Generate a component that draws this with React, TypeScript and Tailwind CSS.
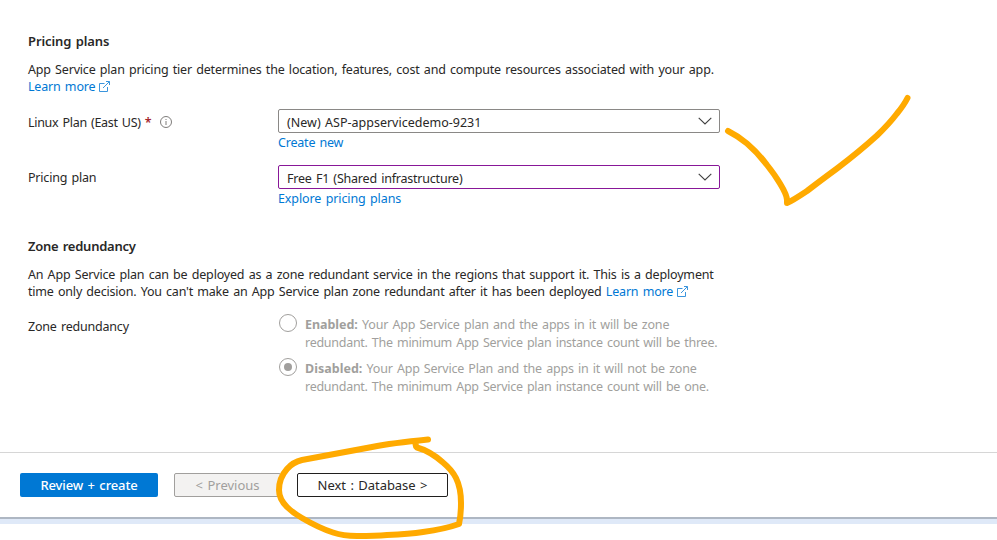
import type { ReactNode } from "react";

function ExternalIcon() {
  return (
    <svg className="ml-1 inline-block h-[11px] w-[11px] align-[-1px]" viewBox="0 0 11 11" fill="none" stroke="#3b95dd" strokeWidth="1">
      <path d="M5.500 2.500h-5v8h8V6" />
      <path d="M4 7 10.300.7M7 .5h3.500V4" />
    </svg>
  );
}

function Select({ value, border }: { value: string; border: string }) {
  return (
    <div className={`flex h-6 w-[442px] items-center justify-between rounded-[2px] border bg-white pl-2 pr-[7px] ${border}`}>
      <span className="pt-[2px]">{value}</span>
      <svg className="h-2 w-[14px]" viewBox="0 0 14 8" fill="none" stroke="#404040" strokeWidth="1.100">
        <path d="M.7.9 7 7 13.300.9" />
      </svg>
    </div>
  );
}

function Radio({ checked, children }: { checked?: boolean; children: ReactNode }) {
  return (
    <div className="flex h-11 tracking-[-0.27px] text-[#a19f9d]">
      <span className="mt-[-1px] ml-px flex h-[18px] w-[18px] shrink-0 items-center justify-center rounded-full border border-[#a19f9d]">
        {checked && <span className="h-2 w-2 rounded-full bg-[#a19f9d]" />}
      </span>
      <div className="ml-2 pt-px leading-[18px]">{children}</div>
    </div>
  );
}

export default function App() {
  return (
    <div className="relative h-[540px] w-[997px] overflow-hidden bg-white font-['Noto_Sans','Open_Sans',sans-serif] text-[12.5px] leading-[17px] tracking-[-0.1px] [word-spacing:1.2px] whitespace-nowrap text-[#292827]">
      <main className="h-[452px] pt-8 pl-7">
        <h2 className="h-[18px] text-[13px] leading-[18px] font-semibold">Pricing plans</h2>
        <div className="mt-[11px] h-[34px] tracking-[-0.18px]">
          <p>App Service plan pricing tier determines the location, features, cost and compute resources associated with your app.</p>
          <a className="text-[#0078d4]">Learn more<ExternalIcon /></a>
        </div>
        <div className="mt-[14px] flex h-14">
          <div className="flex h-[26px] w-[250px] items-center">
            <span className="tracking-[-0.3px]">Linux Plan (East US)</span>
            <span className="ml-1 font-semibold text-[#a4262c]">*</span>
            <svg className="ml-[9px] h-3 w-3" viewBox="0 0 12 12" fill="none" stroke="#706e6c" strokeWidth=".9">
              <circle cx="6" cy="6" r="5.500" />
              <path d="M6 5v4M6 3v1" />
            </svg>
          </div>
          <div>
            <Select value="(New) ASP-appservicedemo-9231" border="border-[#8a8886] tracking-[0px]" />
            <a className="mt-px block tracking-[-0.2px] text-[#0078d4]">Create new</a>
          </div>
        </div>
        <div className="flex h-[72px]">
          <div className="flex h-[25px] w-[250px] items-center tracking-[-0.2px]">Pricing plan</div>
          <div>
            <Select value="Free F1 (Shared infrastructure)" border="border-[#881798] tracking-[-0.21px]" />
            <a className="mt-px block text-[#0078d4]">Explore pricing plans</a>
          </div>
        </div>
        <h2 className="h-[18px] text-[13px] leading-[18px] font-semibold tracking-[-0.25px]">Zone redundancy</h2>
        <div className="mt-[11px] h-[34px] tracking-[-0.18px]">
          <p>An App Service plan can be deployed as a zone redundant service in the regions that support it. This is a deployment</p>
          <p>
            <span className="tracking-[-0.195px]">time only decision. You can't make an App Service plan zone redundant after it has been deployed </span>
            <a className="text-[#0078d4]">Learn more<ExternalIcon /></a>
          </p>
        </div>
        <div className="mt-[15px] flex">
          <div className="w-[250px] pt-[3px] tracking-[-0.2px]">Zone redundancy</div>
          <div>
            <Radio>
              <p className="tracking-[-0.2px]"><b className="tracking-[-0.04px]">Enabled:</b> Your App Service plan and the apps in it will be zone</p>
              <p>redundant. The minimum App Service plan instance count will be three.</p>
            </Radio>
            <Radio checked>
              <p className="tracking-[-0.21px]"><b className="tracking-[0.02px]">Disabled:</b> Your App Service Plan and the apps in it will not be zone</p>
              <p>redundant. The minimum App Service plan instance count will be one.</p>
            </Radio>
          </div>
        </div>
      </main>
      <footer className="flex h-[65px] border-t border-[#d6d6d6] pt-5 pl-5 text-[13px] tracking-[0px]">
        <button className="h-6 w-[138px] rounded-[2px] bg-[#0078d4] font-medium tracking-[-0.12px] [word-spacing:1.2px] text-white">Review + create</button>
        <button className="ml-4 h-6 w-[107px] rounded-[2px] border border-[#a19f9d] bg-[#f3f2f1] [word-spacing:1.2px] text-[#a19f9d]">&lt; Previous</button>
        <button className="ml-4 h-6 w-[151px] rounded-[2px] border border-[#201f1e] bg-white tracking-[-0.06px] [word-spacing:1.2px]">Next : Database &gt;</button>
      </footer>
      <div className="h-[7px] border-t-2 border-[#aeb7c3] bg-[#dfe9f8]" />
      <svg className="absolute inset-0 h-[540px] w-[997px]" viewBox="0 0 997 540" fill="none" stroke="#ffaa00" strokeWidth="6" strokeLinecap="round" strokeLinejoin="round">
        <path d="M728 131Q738 136 747 143.500Q758 153 767 165Q775 175 780 183.500Q787 195 787 200V203Q792 201 807 191Q820 181 837 168.500Q860 151 877 135.500Q889 124 897 113.500Q904 105 907.500 98" />
        <path d="M428 439.500Q392 443 372 447L302 460Q293 462 287 469Q279 478 279 490Q279 499 287 507Q293 513 302 518Q319 528 333 532.500Q343 536 357 536Q376 536 387 535Q410 534 423 532Q445 529 459 524Q461 515 461 503Q461 488 456 478Q452 470 443 462.500Q430 451 417 447.500Q415 446 416 443" />
      </svg>
    </div>
  );
}
